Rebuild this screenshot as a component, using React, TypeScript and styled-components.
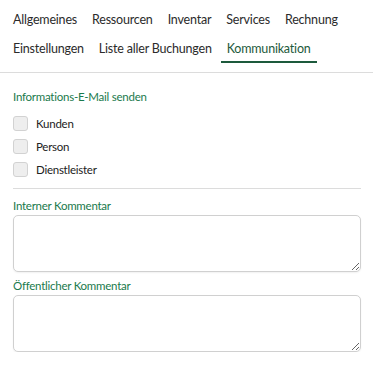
import styled, { createGlobalStyle } from 'styled-components';

// Seite: Reiter oben, darunter Formular für Kommunikation

const GlobalStyle = createGlobalStyle`
  html, body {
    margin: 0;
    padding: 0;
    background: #fff;
  }
  body {
    font-family: Lato, "Open Sans", sans-serif;
    color: #222;
  }
  * { box-sizing: border-box; }
`

const Header = styled.div`
  padding: 5px 7px 9px;
  border-bottom: 1px solid #dcdcdc;
`

const TabList = styled.nav`
  display: flex;
  flex-wrap: wrap;
  column-gap: 3px;
`

const Tab = styled.div<{ $active?: boolean }>`
  padding: 7px 6px 5px;
  font-size: 12.5px;
  letter-spacing: -0.2px;
  line-height: 15px;
  color: ${p => (p.$active ? '#1d5a3c' : '#2b2b2b')};
  border-bottom: 2px solid ${p => (p.$active ? '#1d5a3c' : 'transparent')};
  white-space: nowrap;
`

const Content = styled.div`
  padding: 16px 12px 0 13px;
`

const SectionLabel = styled.div<{ $top?: number }>`
  font-size: 11.5px;
  letter-spacing: -0.25px;
  line-height: 16px;
  color: #1a7a4c;
  margin-top: ${p => p.$top ?? 0}px;
`

const CheckList = styled.div`
  margin-top: 7px;
  display: flex;
  flex-direction: column;
`

const CheckRow = styled.label`
  height: 23px;
  display: flex;
  align-items: center;
  gap: 8px;
  font-size: 11.5px;
  letter-spacing: -0.25px;
  color: #222;
`

const Box = styled.span`
  width: 15px;
  height: 15px;
  border: 1px solid #d2d2d2;
  border-radius: 3px;
  background: #eeeeee;
`

const Divider = styled.hr`
  border: 0;
  border-top: 1px solid #dcdcdc;
  margin: 7px 0 0;
`

const TextArea = styled.textarea`
  display: block;
  width: 100%;
  height: 57px;
  margin-top: 1px;
  border: 1px solid #d0d0d0;
  border-radius: 5px;
  box-shadow: 0 1px 2px rgba(0, 0, 0, 0.06);
  resize: vertical;
  font-family: inherit;
  outline: none;
`

const tabs = [
  'Allgemeines',
  'Ressourcen',
  'Inventar',
  'Services',
  'Rechnung',
  'Einstellungen',
  'Liste aller Buchungen',
  'Kommunikation',
]

export default function App() {
  return (
    <>
      <GlobalStyle />
      <Header>
        <TabList>
          {tabs.map(t => (
            <Tab key={t} $active={t === 'Kommunikation'}>
              {t}
            </Tab>
          ))}
        </TabList>
      </Header>
      <Content>
        <SectionLabel>Informations-E-Mail senden</SectionLabel>
        <CheckList>
          {['Kunden', 'Person', 'Dienstleister'].map(n => (
            <CheckRow key={n}>
              <Box />
              {n}
            </CheckRow>
          ))}
        </CheckList>
        <Divider />
        <SectionLabel $top={9}>Interner Kommentar</SectionLabel>
        <TextArea />
        <SectionLabel $top={6}>Öffentlicher Kommentar</SectionLabel>
        <TextArea />
      </Content>
    </>
  );
}
